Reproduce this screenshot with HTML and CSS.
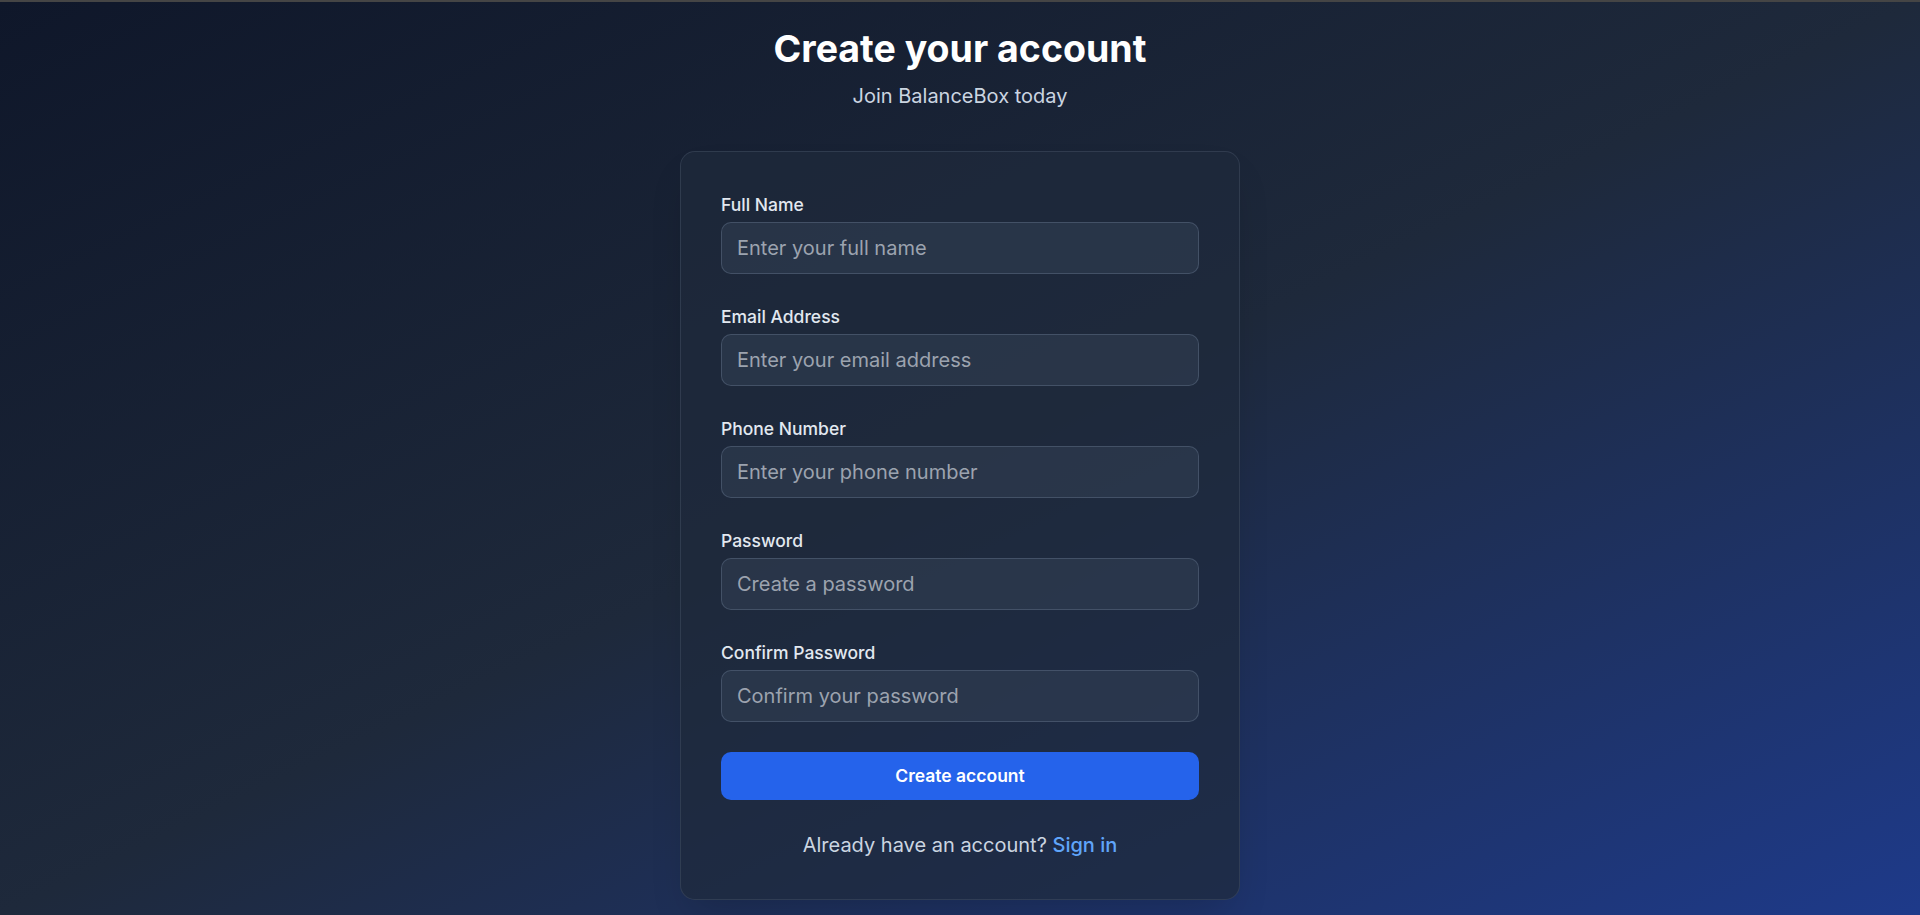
FILE: index.html
```html
<!DOCTYPE html>
<html lang="en">
<head>
<meta charset="utf-8">
<title>Create your account - BalanceBox</title>
<link rel="stylesheet" href="styles.css">
</head>
<body>
<div class="page">
  <header class="header">
    <h1 class="title">Create your account</h1>
    <p class="subtitle">Join BalanceBox today</p>
  </header>
  <main class="card">
    <form class="form">
      <div class="field">
        <label class="label" for="name">Full Name</label>
        <input class="input" id="name" type="text" placeholder="Enter your full name">
      </div>
      <div class="field">
        <label class="label" for="email">Email Address</label>
        <input class="input" id="email" type="email" placeholder="Enter your email address">
      </div>
      <div class="field">
        <label class="label" for="phone">Phone Number</label>
        <input class="input" id="phone" type="tel" placeholder="Enter your phone number">
      </div>
      <div class="field">
        <label class="label" for="password">Password</label>
        <input class="input" id="password" type="password" placeholder="Create a password">
      </div>
      <div class="field">
        <label class="label" for="confirm">Confirm Password</label>
        <input class="input" id="confirm" type="password" placeholder="Confirm your password">
      </div>
      <button class="button" type="button">Create account</button>
    </form>
    <p class="footer">Already have an account? <a class="link" href="#">Sign in</a></p>
  </main>
</div>
</body>
</html>
```
FILE: styles.css
```css
* {
  box-sizing: border-box;
}

html, body {
  margin: 0;
  padding: 0;
}

body {
  font-family: "Inter", "Noto Sans", sans-serif;
  background: #0f172a;
}

.page {
  min-height: 915px;
  border-top: 2px solid #454545;
  background: linear-gradient(to bottom right, #0f172a 0%, #1e293b 50%, #1e3a8a 100%);
  display: flex;
  flex-direction: column;
  align-items: center;
  padding-top: 24px;
  padding-bottom: 15px;
}

.header {
  text-align: center;
}

.title {
  margin: 0;
  font-size: 37.5px;
  line-height: 45px;
  font-weight: 700;
  color: #ffffff;
}

.subtitle {
  margin: 10px 0 0;
  font-size: 20px;
  line-height: 30px;
  color: #cbd5e1;
}

.card {
  margin-top: 40px;
  width: 560px;
  padding: 40px 40px 39px;
  border: 1px solid rgba(71, 85, 105, 0.45);
  border-radius: 15px;
  background: rgba(30, 41, 59, 0.72);
  box-shadow: 0 20px 40px -12px rgba(0, 0, 0, 0.18);
}

.form {
  display: flex;
  flex-direction: column;
  gap: 30px;
}

.field {
  display: flex;
  flex-direction: column;
  gap: 5px;
}

.label {
  font-size: 17.5px;
  line-height: 25px;
  font-weight: 500;
  color: #e2e8f0;
}

.input {
  height: 52px;
  width: 100%;
  padding: 0 15px;
  font-family: inherit;
  font-size: 20px;
  color: #ffffff;
  background: rgba(51, 65, 85, 0.5);
  border: 1px solid rgba(100, 116, 139, 0.45);
  border-radius: 10px;
  outline: none;
}

.input::placeholder {
  color: #9ca3af;
  opacity: 1;
}

.button {
  height: 47.5px;
  width: 100%;
  border: none;
  border-radius: 10px;
  background: #2563eb;
  color: #ffffff;
  font-family: inherit;
  font-size: 17.5px;
  font-weight: 600;
  cursor: pointer;
}

.footer {
  margin: 30px 0 0;
  text-align: center;
  font-size: 20px;
  line-height: 30px;
  color: #cbd5e1;
}

.link {
  color: #60a5fa;
  font-weight: 500;
  text-decoration: none;
}
```
